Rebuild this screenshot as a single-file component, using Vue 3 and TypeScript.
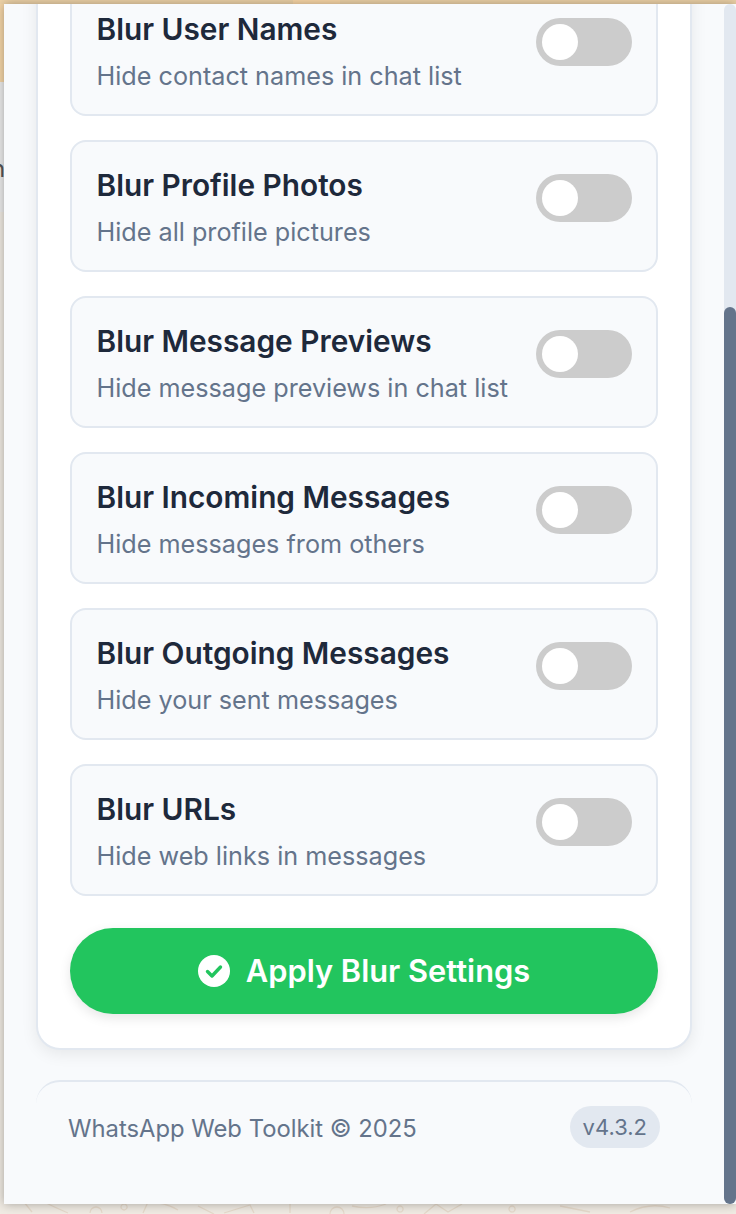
<script setup lang="ts">
interface BlurOption {
  title: string
  hint: string
}

const options: BlurOption[] = [
  { title: 'Blur User Names', hint: 'Hide contact names in chat list' },
  { title: 'Blur Profile Photos', hint: 'Hide all profile pictures' },
  { title: 'Blur Message Previews', hint: 'Hide message previews in chat list' },
  { title: 'Blur Incoming Messages', hint: 'Hide messages from others' },
  { title: 'Blur Outgoing Messages', hint: 'Hide your sent messages' },
  { title: 'Blur URLs', hint: 'Hide web links in messages' },
]
</script>

<template>
  <div class="page">
    <div class="left-text">n</div>
    <svg class="doodles" width="736" height="12" viewBox="0 0 736 12" fill="none" stroke="#e6dacb" stroke-width="1.3">
      <path d="M24 0 L32 10 M44 0 Q56 6 68 11 M90 11 a6 6 0 0 1 12 0 M124 2 a3 3 0 1 0 .1 0 M143 11 L148 0 Q165 0 178 8 M198 4 L214 12 M224 11 L250 3 L254 11 M290 11 V0 M330 12 a7 7 0 0 1 14 0 M352 4 Q370 8 386 2 M400 10 a3 3 0 1 1 .1 0 M424 12 L436 2 L448 10 L462 2 M512 10 a3 3 0 1 1 .1 0 M560 4 L590 10 M630 10 Q650 0 670 6" />
    </svg>
    <main class="panel">
      <div class="content">
        <section class="card">
          <article v-for="option in options" :key="option.title" class="option">
            <div class="copy">
              <h3>{{ option.title }}</h3>
              <p>{{ option.hint }}</p>
            </div>
            <span class="toggle"><span class="knob"></span></span>
          </article>
          <button class="apply" type="button">
            <svg width="32" height="32" viewBox="0 0 32 32" aria-hidden="true">
              <circle cx="16" cy="16" r="16" fill="#ffffff" />
              <path d="M9.5 16.5l4.5 4.5 8.5-9" fill="none" stroke="#22c55e" stroke-width="3.4" stroke-linecap="round" stroke-linejoin="round" />
            </svg>
            <span>Apply Blur Settings</span>
          </button>
        </section>
        <footer class="foot">
          <span class="credit">WhatsApp Web Toolkit © 2025</span>
          <span class="version">v4.3.2</span>
        </footer>
      </div>
      <div class="track"><div class="thumb"></div></div>
    </main>
  </div>
</template>

<style>
html,
body {
  margin: 0;
  background: #f0ebe3;
}
</style>

<style scoped>
.page {
  position: relative;
  box-sizing: border-box;
  width: 736px;
  height: 1214px;
  padding: 4px 0 10px 4px;
  overflow: hidden;
  font-family: Inter, "Liberation Sans", sans-serif;
  background:
    linear-gradient(90deg, #eed3a8 0 293px, #fbd8a8 293px 340px, #eed3a8 340px) 0 0 / 100% 4px no-repeat,
    linear-gradient(#f5d6a8, #f5d6a8) 0 0 / 4px 82px no-repeat,
    linear-gradient(#ececec, #ececec) 0 82px / 4px 130px no-repeat,
    #f0ebe3;
}
.left-text {
  position: absolute;
  left: -9px;
  top: 154px;
  font-size: 24px;
  line-height: 30px;
  color: #555;
}
.doodles {
  position: absolute;
  left: 0;
  bottom: 0;
}
.panel {
  position: relative;
  display: flex;
  height: 1200px;
  background: #f8fafc;
  box-shadow: 0 0 10px rgba(0, 0, 0, 0.32);
}
.content {
  flex: 1;
  min-width: 0;
  overflow: hidden;
}
.card {
  box-sizing: border-box;
  width: 656px;
  margin: -52px 0 0 32px;
  padding: 30px 32px 34px;
  display: flex;
  flex-direction: column;
  gap: 24px;
  background: #fff;
  border: 2px solid #e2e8f0;
  border-radius: 24px;
  box-shadow: 0 4px 16px rgba(0, 0, 0, 0.08);
}
.option {
  box-sizing: border-box;
  height: 132px;
  display: flex;
  align-items: flex-start;
  justify-content: space-between;
  padding: 26px 24px 0 24.5px;
  background: #f8fafc;
  border: 2px solid #e2e8f0;
  border-radius: 16px;
}
.copy h3 {
  margin: 0;
  font-size: 29.8px;
  line-height: 34px;
  font-weight: 600;
  color: #1e293b;
}
.copy p {
  margin: 14px 0 0;
  font-size: 25.2px;
  line-height: 32px;
  font-weight: 400;
  color: #64748b;
}
.toggle {
  flex: none;
  box-sizing: border-box;
  width: 96px;
  height: 48px;
  margin-top: 6px;
  padding: 6px;
  background: #ccc;
  border-radius: 24px;
}
.knob {
  display: block;
  width: 36px;
  height: 36px;
  background: #fff;
  border-radius: 50%;
}
.apply {
  display: flex;
  align-items: center;
  justify-content: center;
  gap: 16px;
  height: 86px;
  margin-top: 8px;
  padding: 0;
  border: 0;
  border-radius: 43px;
  background: #22c55e;
  color: #fff;
  font: 600 30.8px/36px Inter, "Liberation Sans", sans-serif;
  box-shadow: 0 4px 12px rgba(0, 0, 0, 0.1);
}
.foot {
  box-sizing: border-box;
  width: 656px;
  height: 124px;
  margin: 30px 0 0 32px;
  padding: 24px 32px 0;
  display: flex;
  align-items: flex-start;
  justify-content: space-between;
  border-top: 2px solid #e2e8f0;
  border-radius: 24px 24px 0 0;
}
.credit {
  margin-top: 7px;
  font-size: 23.8px;
  line-height: 32px;
  color: #64748b;
}
.version {
  padding: 5px 13px;
  font-size: 22px;
  line-height: 32px;
  color: #64748b;
  background: #e2e8f0;
  border-radius: 21px;
}
.track {
  flex: none;
  width: 12px;
  padding-top: 303px;
  box-sizing: border-box;
  background: #e2e8f0;
  border-radius: 6px;
}
.thumb {
  height: 897px;
  background: #64748b;
  border-radius: 6px;
}
</style>
